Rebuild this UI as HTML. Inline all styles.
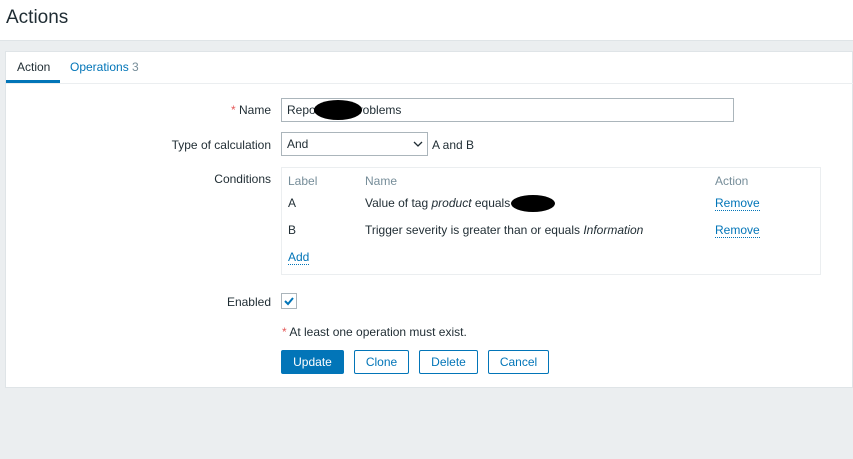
<!DOCTYPE html>
<html><head><meta charset="utf-8"><style>
body{margin:0;width:853px;height:459px;background:#ebeef0;font-family:"Liberation Sans",sans-serif;font-size:12px;color:#1f2c33;position:relative;overflow:hidden}
.hdr{position:absolute;left:0;top:0;width:853px;height:40px;background:#fff;border-bottom:1px solid #dfe4e7}
.hdr h1{margin:0;position:absolute;left:6px;top:7px;font-size:19px;font-weight:normal;color:#1f2c33}
.card{position:absolute;left:5px;top:51px;width:848px;height:337px;background:#fff;border:1px solid #dfe4e7;box-sizing:border-box}
.tabs{position:absolute;left:0;top:0;width:848px;height:31px;border-bottom:1px solid #ebeef0}
.tab{position:absolute;top:8px;font-size:12px}
.ab{position:absolute;left:0;top:28px;width:54px;height:3px;background:#0275b8}
a,.lnk{color:#0275b8}
.lbl{position:absolute;right:581px;font-size:12px;text-align:right;white-space:nowrap}
.abs{position:absolute}
.inp{position:absolute;border:1px solid #abb5bb;box-sizing:border-box;height:24px;padding:4px 5px;background:#fff}
.btn{position:absolute;top:298px;height:24px;box-sizing:border-box;border:1px solid #0275b8;color:#0275b8;border-radius:2px;text-align:center;line-height:22px;background:#fff}
.blob{position:absolute;background:#000;border-radius:50%}
</style></head><body>
<div class="hdr"><h1>Actions</h1></div>
<div class="card">
 <div class="tabs">
  <div class="tab" style="left:11px">Action</div>
  <div class="tab lnk" style="left:64px">Operations <span style="color:#768d99">3</span></div>
  <div class="ab"></div>
 </div>
 <div class="lbl" style="top:51px"><span style="color:#e45959">*</span> Name</div>
 <div class="inp" style="left:275px;top:46px;width:453px">Repo<span style="display:inline-block;width:43px"></span>roblems</div>
 <div class="blob" style="left:308px;top:48px;width:48px;height:20px"></div>
 <div class="lbl" style="top:86px">Type of calculation</div>
 <div class="inp" style="left:275px;top:80px;width:147px">And
  <svg style="position:absolute;right:4px;top:8px" width="10" height="7"><path d="M1 1L5 5L9 1" stroke="#1f2c33" fill="none" stroke-width="1.3"/></svg></div>
 <div class="abs" style="left:426px;top:86px">A and B</div>
 <div class="lbl" style="top:120px">Conditions</div>
 <div class="abs" style="left:275px;top:115px;width:540px;height:108px;border:1px solid #ebeef0;box-sizing:border-box">
  <div class="abs" style="left:6px;top:6px;color:#768d99">Label</div>
  <div class="abs" style="left:83px;top:6px;color:#768d99">Name</div>
  <div class="abs" style="left:433px;top:6px;color:#768d99">Action</div>
  <div class="abs" style="left:6px;top:28px">A</div>
  <div class="abs" style="left:83px;top:28px">Value of tag <i>product</i> equals</div>
  <div class="blob" style="left:229px;top:27px;width:44px;height:17px"></div>
  <div class="abs lnk" style="left:433px;top:28px;border-bottom:1px dotted #0275b8">Remove</div>
  <div class="abs" style="left:6px;top:55px">B</div>
  <div class="abs" style="left:83px;top:55px">Trigger severity is greater than or equals <i>Information</i></div>
  <div class="abs lnk" style="left:433px;top:55px;border-bottom:1px dotted #0275b8">Remove</div>
  <div class="abs lnk" style="left:6px;top:82px;border-bottom:1px dotted #0275b8">Add</div>
 </div>
 <div class="lbl" style="top:243px">Enabled</div>
 <div class="abs" style="left:275px;top:241px;width:16px;height:16px;border:1px solid #abb5bb;box-sizing:border-box">
  <svg width="14" height="14" style="position:absolute;left:0;top:0"><path d="M3 7L6 10L11 4" stroke="#0275b8" stroke-width="2" fill="none"/></svg></div>
 <div class="abs" style="left:276px;top:273px"><span style="color:#e45959">*</span> At least one operation must exist.</div>
 <div class="btn" style="left:275px;width:63px;background:#0275b8;color:#fff">Update</div>
 <div class="btn" style="left:348px;width:55px">Clone</div>
 <div class="btn" style="left:413px;width:59px">Delete</div>
 <div class="btn" style="left:482px;width:61px">Cancel</div>
</div>
</body></html>
